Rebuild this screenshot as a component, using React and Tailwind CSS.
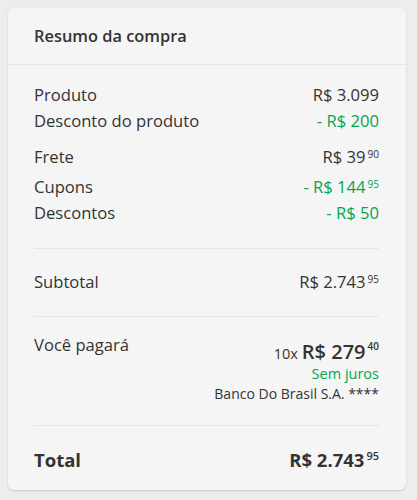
import React from "react";

const Price = ({ value, cents, className = "", centsClass = "text-[10px] leading-[12px] mt-[1px]" }) => (
  <span className={`inline-flex items-start ${className}`}>
    <span>{value}</span>
    {cents && <span className={`ml-[2px] ${centsClass}`}>{cents}</span>}
  </span>
);

const Row = ({ label, children, className = "" }) => (
  <div className={`flex items-start justify-between leading-[20px] ${className}`}>
    <span>{label}</span>
    {children}
  </div>
);

export default function App() {
  return (
    <div
      className="min-h-screen bg-[#ededed] pt-2 pl-2 pr-[11px] text-[16.6px] text-[#333]"
      style={{ fontFamily: "'Open Sans', 'Noto Sans', sans-serif" }}
    >
      <div className="bg-[#f5f5f5] rounded-[6px] shadow-[0_1px_2px_rgba(0,0,0,0.15)] h-[482px]">
        {/* Header */}
        <div className="h-[57px] px-[26px] flex items-center border-b border-[#e6e6e6]">
          <h2 className="text-[16.4px] font-semibold">Resumo da compra</h2>
        </div>

        <div className="pl-[26px] pr-[27px]">
          {/* Items */}
          <div className="pt-[20px] pb-[25px] border-b border-[#e6e6e6]">
            <Row label="Produto">
              <Price value="R$ 3.099" />
            </Row>
            <Row label="Desconto do produto" className="mt-[6px]">
              <Price value="- R$ 200" className="text-[#00a650]" />
            </Row>
            <Row label="Frete" className="mt-[16px]">
              <Price value="R$ 39" cents="90" />
            </Row>
            <Row label="Cupons" className="mt-[10px]">
              <Price value="- R$ 144" cents="95" className="text-[#00a650]" />
            </Row>
            <Row label="Descontos" className="mt-[6px]">
              <Price value="- R$ 50" className="text-[#00a650]" />
            </Row>
          </div>

          {/* Subtotal */}
          <div className="pt-[23px] pb-[24px] border-b border-[#e6e6e6]">
            <Row label="Subtotal">
              <Price value="R$ 2.743" cents="95" />
            </Row>
          </div>

          {/* Installments */}
          <div className="pt-[18px] pb-[21px] border-b border-[#e6e6e6] flex justify-between items-start">
            <span className="leading-[20px]">Você pagará</span>
            <div className="flex flex-col items-end mt-[4px]">
              <div className="flex items-baseline">
                <span className="text-[14.5px] mr-[4px]">10x</span>
                <Price value="R$ 279" cents="40" className="text-[20px] font-semibold leading-[26px]" />
              </div>
              <span className="text-[14.5px] text-[#00a650] leading-[20px] -mt-[1px]">Sem juros</span>
              <span className="text-[14px] leading-[20px]">Banco Do Brasil S.A. ****</span>
            </div>
          </div>

          {/* Total */}
          <div className="pt-[22px]">
            <div className="flex justify-between items-start text-[18.5px] font-bold leading-[24px]">
              <span>Total</span>
              <Price value="R$ 2.743" cents="95" centsClass="text-[11px] leading-[12px] mt-[2px] font-semibold" />
            </div>
          </div>
        </div>
      </div>
    </div>
  );
}
